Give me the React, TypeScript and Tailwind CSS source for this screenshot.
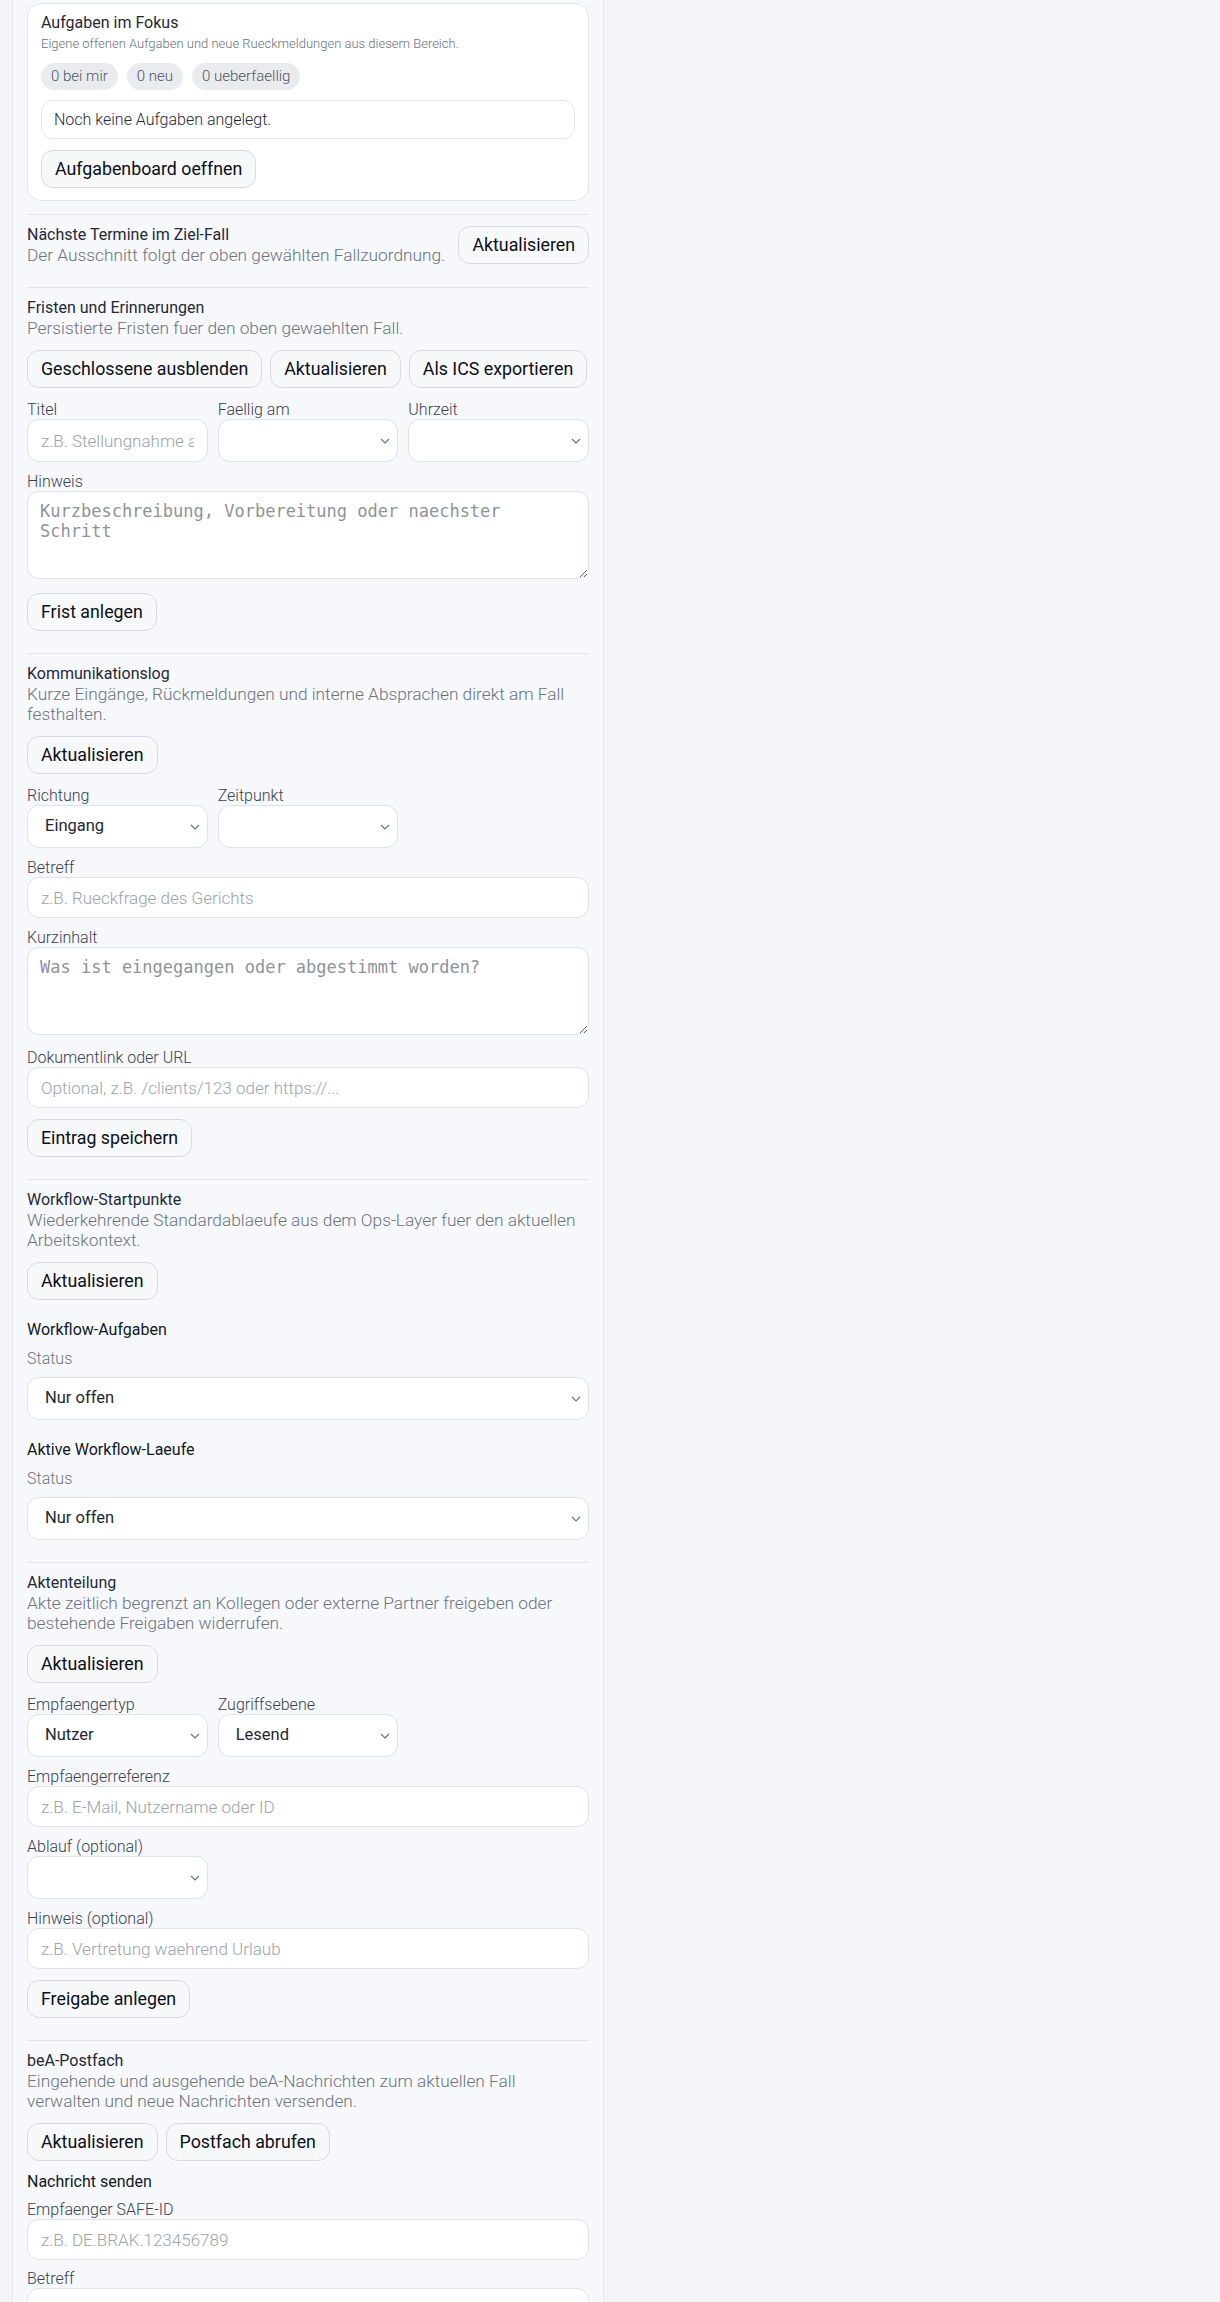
import type { ReactNode } from "react";

function Btn({ children }: { children: ReactNode }) {
  return (
    <button
      type="button"
      className="h-[38px] shrink-0 rounded-[12px] border border-[#d7dae1] bg-[#f7f8fa] px-[13px] text-[17.8px] font-normal text-[#0b0f19]"
    >
      {children}
    </button>
  );
}

function SectionHead({ title, desc, nowrap }: { title: string; desc: string; nowrap?: boolean }) {
  return (
    <div>
      <h3 className="text-[16px] font-normal leading-[20px] text-[#1f2937]">{title}</h3>
      <p className={`text-[17.3px] font-light leading-[20px] text-[#6b7280] ${nowrap ? "whitespace-nowrap" : ""}`}>
        {desc}
      </p>
    </div>
  );
}

function Label({ children, muted }: { children: ReactNode; muted?: boolean }) {
  return (
    <label
      className={`block text-[16px] font-light leading-[19px] ${muted ? "text-[#6b7280]" : "text-[#374151]"}`}
    >
      {children}
    </label>
  );
}

function SubHead({ children }: { children: ReactNode }) {
  return <h4 className="text-[16px] font-normal leading-[20px] text-[#111827]">{children}</h4>;
}

function TextInput({ placeholder, tall }: { placeholder: string; tall?: boolean }) {
  return (
    <input
      type="text"
      placeholder={placeholder}
      className={`block w-full rounded-[12px] border border-[#dfe2e8] bg-white px-[13px] text-[17px] font-light text-[#1f2937] outline-none placeholder:text-[#9ca3af] ${
        tall ? "h-[43px]" : "h-[41px]"
      }`}
    />
  );
}

function Select({ value }: { value?: string }) {
  return (
    <div className="relative">
      <select
        defaultValue={value ?? ""}
        className="block h-[43px] w-full appearance-none rounded-[12px] border border-[#dfe2e8] bg-white pl-[17px] pr-8 text-[16.5px] font-normal text-[#222832] outline-none"
      >
        <option value={value ?? ""}>{value ?? ""}</option>
      </select>
      <svg
        className="pointer-events-none absolute right-[8px] top-1/2 -translate-y-1/2"
        width="10"
        height="6"
        viewBox="0 0 10 6"
        fill="none"
        stroke="#6b7280"
        strokeWidth="1.2"
      >
        <path d="M1 1l4 4 4-4" />
      </svg>
    </div>
  );
}

function TextArea({ placeholder }: { placeholder: string }) {
  return (
    <textarea
      placeholder={placeholder}
      className="block h-[88px] w-full rounded-[12px] border border-[#dfe2e8] bg-white px-[12px] py-[9px] font-['DejaVu_Sans_Mono',monospace] text-[17px] leading-[20px] text-[#1f2937] outline-none placeholder:text-[#8f939b]"
    />
  );
}

function Section({ children }: { children: ReactNode }) {
  return <section className="border-t border-[#e3e6ec] pb-[22px] pt-[10px]">{children}</section>;
}

export default function App() {
  return (
    <div className="min-h-[2302px] bg-[#f4f5f9] font-['Roboto',sans-serif]">
      <aside className="ml-[12px] min-h-[2302px] w-[592px] border-x border-[#e6e8ee] bg-[#f7f8fc] px-[14px] pt-[3px]">
        {/* Aufgaben-Karte */}
        <div className="mb-[13px] rounded-[14px] border border-[#e5e7eb] bg-white px-[13px] pb-[12px] pt-[9px]">
          <h3 className="text-[16px] leading-[20px] text-[#1f2937]">Aufgaben im Fokus</h3>
          <p className="mt-[3px] text-[13px] font-light leading-[16px] text-[#6b7280]">
            Eigene offenen Aufgaben und neue Rueckmeldungen aus diesem Bereich.
          </p>
          <div className="mt-[11px] flex gap-[9px]">
            {["0 bei mir", "0 neu", "0 ueberfaellig"].map((c) => (
              <span
                key={c}
                className="flex h-[27px] items-center rounded-full bg-[#eaebee] px-[10px] text-[15px] font-light text-[#4b5563]"
              >
                {c}
              </span>
            ))}
          </div>
          <div className="mt-[10px] flex h-[39px] items-center rounded-[12px] border border-[#e5e7eb] px-[12px] text-[16px] font-light text-[#1f2937]">
            Noch keine Aufgaben angelegt.
          </div>
          <div className="mt-[11px]">
            <Btn>Aufgabenboard oeffnen</Btn>
          </div>
        </div>

        {/* Termine */}
        <Section>
          <div className="flex items-center justify-between gap-2">
            <SectionHead
              nowrap
              title="Nächste Termine im Ziel-Fall"
              desc="Der Ausschnitt folgt der oben gewählten Fallzuordnung."
            />
            <Btn>Aktualisieren</Btn>
          </div>
        </Section>

        {/* Fristen */}
        <Section>
          <SectionHead
            title="Fristen und Erinnerungen"
            desc="Persistierte Fristen fuer den oben gewaehlten Fall."
          />
          <div className="mt-[12px] flex gap-[8px]">
            <Btn>Geschlossene ausblenden</Btn>
            <Btn>Aktualisieren</Btn>
            <Btn>Als ICS exportieren</Btn>
          </div>
          <div className="mt-[12px] grid grid-cols-3 gap-x-[10px]">
            <div>
              <Label>Titel</Label>
              <TextInput tall placeholder="z.B. Stellungnahme an Gegenseite" />
            </div>
            <div>
              <Label>Faellig am</Label>
              <Select />
            </div>
            <div>
              <Label>Uhrzeit</Label>
              <Select />
            </div>
          </div>
          <div className="mt-[10px]">
            <Label>Hinweis</Label>
            <TextArea placeholder="Kurzbeschreibung, Vorbereitung oder naechster Schritt" />
          </div>
          <div className="mt-[14px]">
            <Btn>Frist anlegen</Btn>
          </div>
        </Section>

        {/* Kommunikationslog */}
        <Section>
          <SectionHead
            title="Kommunikationslog"
            desc="Kurze Eingänge, Rückmeldungen und interne Absprachen direkt am Fall festhalten."
          />
          <div className="mt-[12px]">
            <Btn>Aktualisieren</Btn>
          </div>
          <div className="mt-[12px] grid grid-cols-3 gap-x-[10px]">
            <div>
              <Label>Richtung</Label>
              <Select value="Eingang" />
            </div>
            <div>
              <Label>Zeitpunkt</Label>
              <Select />
            </div>
          </div>
          <div className="mt-[10px]">
            <Label>Betreff</Label>
            <TextInput placeholder="z.B. Rueckfrage des Gerichts" />
          </div>
          <div className="mt-[10px]">
            <Label>Kurzinhalt</Label>
            <TextArea placeholder="Was ist eingegangen oder abgestimmt worden?" />
          </div>
          <div className="mt-[13px]">
            <Label>Dokumentlink oder URL</Label>
            <TextInput placeholder="Optional, z.B. /clients/123 oder https://..." />
          </div>
          <div className="mt-[11px]">
            <Btn>Eintrag speichern</Btn>
          </div>
        </Section>

        {/* Workflows */}
        <Section>
          <SectionHead
            title="Workflow-Startpunkte"
            desc="Wiederkehrende Standardablaeufe aus dem Ops-Layer fuer den aktuellen Arbeitskontext."
          />
          <div className="mt-[12px]">
            <Btn>Aktualisieren</Btn>
          </div>
          <div className="mt-[20px]">
            <SubHead>Workflow-Aufgaben</SubHead>
          </div>
          <div className="mt-[9px]">
            <Label muted>Status</Label>
            <div className="mt-[9px]">
              <Select value="Nur offen" />
            </div>
          </div>
          <div className="mt-[20px]">
            <SubHead>Aktive Workflow-Laeufe</SubHead>
          </div>
          <div className="mt-[9px]">
            <Label muted>Status</Label>
            <div className="mt-[9px]">
              <Select value="Nur offen" />
            </div>
          </div>
        </Section>

        {/* Aktenteilung */}
        <Section>
          <SectionHead
            title="Aktenteilung"
            desc="Akte zeitlich begrenzt an Kollegen oder externe Partner freigeben oder bestehende Freigaben widerrufen."
          />
          <div className="mt-[12px]">
            <Btn>Aktualisieren</Btn>
          </div>
          <div className="mt-[12px] grid grid-cols-3 gap-x-[10px]">
            <div>
              <Label>Empfaengertyp</Label>
              <Select value="Nutzer" />
            </div>
            <div>
              <Label>Zugriffsebene</Label>
              <Select value="Lesend" />
            </div>
          </div>
          <div className="mt-[10px]">
            <Label>Empfaengerreferenz</Label>
            <TextInput placeholder="z.B. E-Mail, Nutzername oder ID" />
          </div>
          <div className="mt-[10px] grid grid-cols-3 gap-x-[10px]">
            <div>
              <Label>Ablauf (optional)</Label>
              <Select />
            </div>
          </div>
          <div className="mt-[10px]">
            <Label>Hinweis (optional)</Label>
            <TextInput placeholder="z.B. Vertretung waehrend Urlaub" />
          </div>
          <div className="mt-[11px]">
            <Btn>Freigabe anlegen</Btn>
          </div>
        </Section>

        {/* beA */}
        <Section>
          <SectionHead
            title="beA-Postfach"
            desc="Eingehende und ausgehende beA-Nachrichten zum aktuellen Fall verwalten und neue Nachrichten versenden."
          />
          <div className="mt-[12px] flex gap-[8px]">
            <Btn>Aktualisieren</Btn>
            <Btn>Postfach abrufen</Btn>
          </div>
          <div className="mt-[11px]">
            <SubHead>Nachricht senden</SubHead>
          </div>
          <div className="mt-[8px]">
            <Label>Empfaenger SAFE-ID</Label>
            <TextInput placeholder="z.B. DE.BRAK.123456789" />
          </div>
          <div className="mt-[9px]">
            <Label>Betreff</Label>
            <TextInput placeholder="z.B. Schriftsatz zur Akte" />
          </div>
          <div className="mt-[10px]">
            <Label>Nachricht</Label>
            <TextArea placeholder="Nachrichtentext" />
          </div>
        </Section>
      </aside>
    </div>
  );
}
